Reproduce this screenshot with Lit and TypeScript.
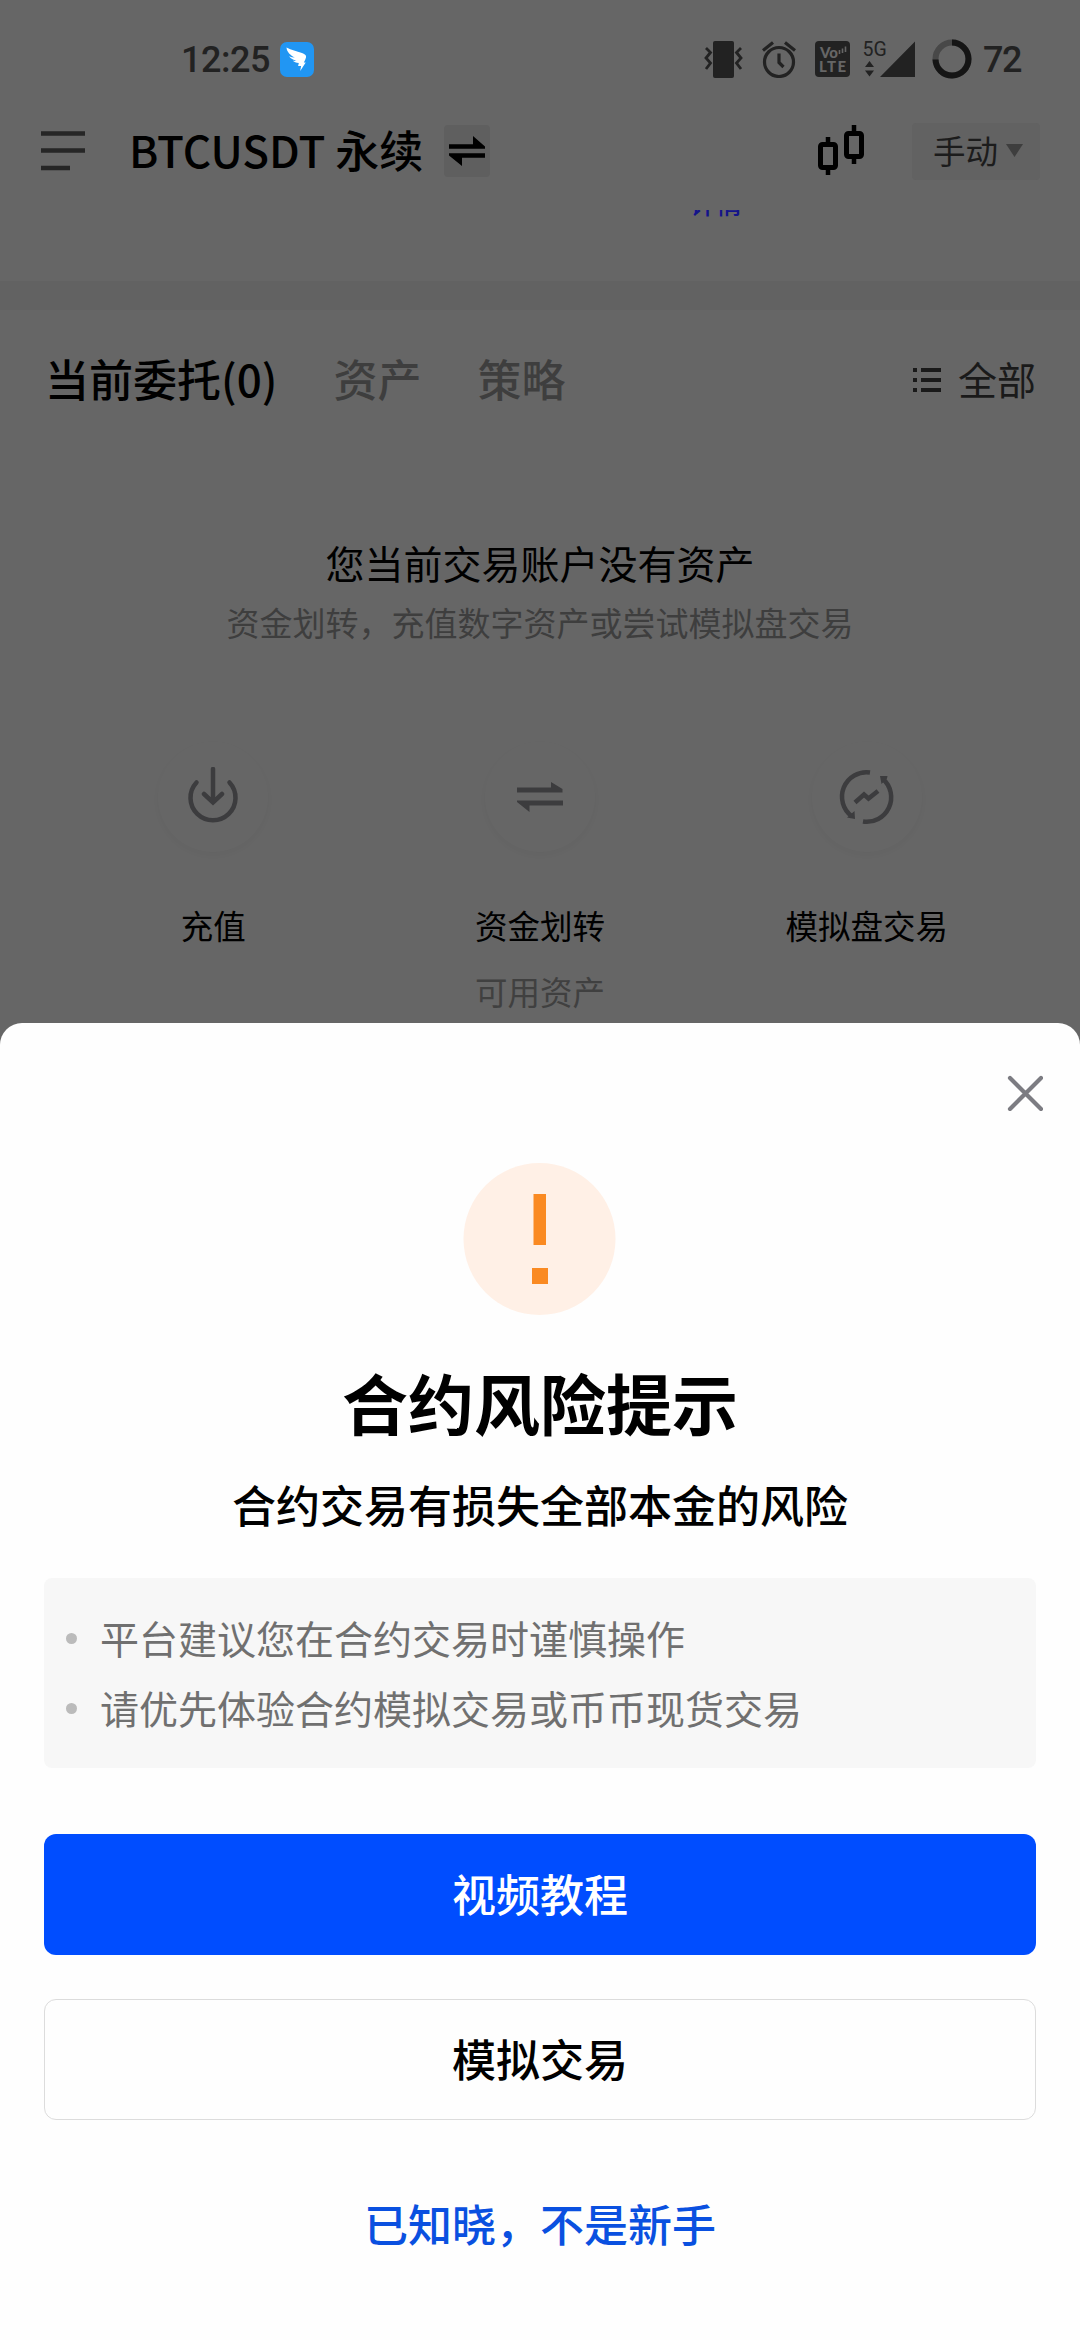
import { LitElement, html, css, svg } from "lit";
import { customElement } from "lit/decorators.js";

const swapShape = svg`<path d="M0 8.2h24V0l12 10.4v2.4H0zM36 17.2H0v2.2L13 30v-8.2h23z"/>`;

@customElement("status-bar")
class StatusBar extends LitElement {
  static styles = css`
    :host { display: flex; align-items: center; height: 118px; color: #222; fill: #222; font-family: Roboto, "Liberation Sans", sans-serif; }
    svg { display: block; flex: none; }
    .time { width: 97px; margin-left: 181px; padding-top: 2px; font-size: 36px; line-height: 40px; font-weight: 500; letter-spacing: -0.5px; white-space: nowrap; }
    .wing { margin-left: 2px; }
    .right { display: flex; align-items: center; margin-left: auto; }
    .alarm, .volte { margin-left: 19px; }
    .signal { margin-left: 13px; overflow: visible; }
    .ring { margin-left: 17px; }
    .pct { width: 97px; margin-left: 11px; padding-top: 2px; font-size: 36px; line-height: 40px; font-weight: 500; letter-spacing: -1.5px; }
    .volte text { font: 900 15px Lato, sans-serif; fill: #666; }
    .signal text { font: 400 19.500px Roboto, sans-serif; }
  `;
  render() {
    return html`
      <span class="time">12:25</span>
      <svg class="wing" width="34" height="35" viewBox="0 0 34 35">
        <rect width="34" height="35" rx="7" fill="#2196f3" />
        <path fill="#fff" d="M6.5 5.5c5 2.7 10 3.500 15.500 5.500 3.300 1.200 4.500 2.500 4 4.500-.4 1.800-1.200 3.200-2.200 5h1.900l-5.500 8.500.9-5h-3l.7-3c-2.700-.2-4.800-1-6-2.200 1.200.2 2.500.2 3.600 0-3.200-.8-5.800-2.300-7.400-4.500 1.900.8 3.800 1.200 5.800 1.200C10.500 13.400 6.800 10 6.500 5.500z" />
      </svg>
      <div class="right">
        <svg width="39" height="37" viewBox="0 0 39 37">
          <rect x="9" y="0" width="21" height="37" rx="2" />
          <path fill="none" stroke="#222" stroke-width="2.800" d="M2 7l4.500 4.500L2 17l4.500 5L2 28M37 7l-4.500 4.500L37 17l-4.500 5L37 28" />
        </svg>
        <svg class="alarm" width="34" height="37" viewBox="0 0 34 37" fill="none" stroke="#222" stroke-width="3.200">
          <circle cx="17" cy="21" r="14.500" />
          <path d="M1 9.500L11 1.500M33 9.500L23 1.500M17 12.500v9l4.500 4.500" />
        </svg>
        <svg class="volte" width="35" height="36" viewBox="0 0 35 36">
          <rect width="35" height="36" rx="4" />
          <text x="5" y="16.500" textLength="18">Vo</text>
          <text x="4" y="31" textLength="27">LTE</text>
          <path fill="none" stroke="#666" stroke-width="1.600" d="M24.500 13V9M27.500 12V7.500M30.500 11V5.500" />
        </svg>
        <svg class="signal" width="52" height="36" viewBox="0 0 52 36">
          <text x="-.5" y="14.500">5G</text>
          <path d="M52 .5V36H17zM2 26l4.500-6 4.500 6zM2 29.500l4.500 6 4.500-6z" />
        </svg>
        <svg class="ring" width="40" height="40" viewBox="0 0 40 40" fill="none" stroke-width="6">
          <circle cx="20" cy="20" r="16.500" stroke="#484848" />
          <path stroke="#151515" d="M20 3.500A16.500 16.500 0 1 1 3.500 20.500" />
        </svg>
        <span class="pct">72</span>
      </div>
    `;
  }
}

@customElement("risk-sheet")
class RiskSheet extends LitElement {
  static styles = css`
    :host { display: flex; flex-direction: column; box-sizing: border-box; height: 1317px; padding: 52px 44px 0; background: #fefefe; border-radius: 22px 22px 0 0; color: #000; text-align: center; }
    svg { display: block; }
    .close { align-self: flex-end; margin-right: -7px; }
    .alert { align-self: center; margin-top: 51px; }
    .title { margin: 45px 0 0; font-size: 66px; line-height: 80px; font-weight: 700; }
    .sub { margin: 33px 0 0; font-size: 44px; line-height: 60px; font-weight: 500; }
    .tips { display: flex; flex-direction: column; box-sizing: border-box; height: 190px; margin: 44px 0 0; padding: 24px 21px; list-style: none; border-radius: 8px; background: #f7f7f7; color: #707070; font-size: 39px; line-height: 70px; }
    .tip { display: flex; align-items: center; }
    .dot { width: 11px; height: 11px; margin: 3px 23px 0 1px; border-radius: 50%; background: #bbb; }
    .btn { display: flex; align-items: center; justify-content: center; box-sizing: border-box; height: 121px; padding: 0 0 3px; border: 0; border-radius: 12px; font: inherit; font-size: 44px; font-weight: 500; }
    .primary { margin-top: 66px; background: #004dff; color: #fff; }
    .outline { margin-top: 44px; border: 1.500px solid #dcdcdc; background: #fefefe; color: #000; }
    .link { margin-top: 73px; color: #0a50e0; font-size: 44px; line-height: 60px; font-weight: 500; }
  `;
  render() {
    const tips = ["平台建议您在合约交易时谨慎操作", "请优先体验合约模拟交易或币币现货交易"];
    return html`
      <svg class="close" width="36" height="36" viewBox="0 0 36 36" fill="none" stroke="#7c7c82" stroke-width="4.200" stroke-linecap="round">
        <path d="M3 3l31 31M34 3L3 34" />
      </svg>
      <svg class="alert" width="154" height="154" viewBox="0 0 154 154">
        <circle cx="76.500" cy="77" r="76" fill="#fff0e6" />
        <path fill="#fa8a22" d="M70.500 32h12.500v51H70.500zM69 106h16v16H69z" />
      </svg>
      <h1 class="title">合约风险提示</h1>
      <p class="sub">合约交易有损失全部本金的风险</p>
      <ul class="tips">
        ${tips.map((t) => html`<li class="tip"><span class="dot"></span>${t}</li>`)}
      </ul>
      <button class="btn primary">视频教程</button>
      <button class="btn outline">模拟交易</button>
      <div class="link">已知晓，不是新手</div>
    `;
  }
}

@customElement("app-root")
class AppRoot extends LitElement {
  static styles = css`
    :host { display: block; position: relative; height: 2340px; overflow: hidden; background: #666; color: #000; font-family: "Noto Sans CJK SC", sans-serif; }
    svg { display: block; flex: none; }
    .header { display: flex; align-items: center; height: 66px; padding: 0 40px 0 41px; }
    .pair { margin-left: 43px; font-size: 44px; line-height: 60px; font-weight: 500; white-space: nowrap; padding-bottom: 5px; }
    .swap { display: flex; align-items: center; justify-content: center; width: 46px; height: 52px; margin-left: 21px; background: #5f5f5f; border-radius: 4px; }
    .candles { margin-left: auto; }
    .mode { display: flex; align-items: center; box-sizing: border-box; width: 128px; height: 57px; margin-left: 48px; padding: 0 17px 4px 21px; background: #626262; border-radius: 4px; font-size: 32.500px; color: #1c1c1c; justify-content: space-between; }
    .caret { margin-top: 3px; }
    .scroll { height: 71px; margin-top: 26px; overflow: hidden; }
    .detail { margin: -22px 0 0 690px; font-size: 26px; line-height: 30px; font-weight: 500; color: #14148a; }
    .band { height: 29px; background: #626262; }
    .tabs { display: flex; align-items: center; height: 136px; padding: 0 44px 0 45px; font-size: 44px; color: #3e3e3e; font-weight: 500; white-space: nowrap; }
    .tab { margin-right: 56px; }
    .active { color: #000; }
    .all { display: flex; align-items: center; gap: 17px; margin-left: auto; font-size: 39px; font-weight: 400; color: #1a1a1a; }
    .list { margin-top: 4px; }
    .empty { margin-top: 91px; text-align: center; font-size: 39px; line-height: 50px; }
    .hint { margin-top: 13px; text-align: center; font-size: 33px; line-height: 44px; color: #3e3e3e; }
    .actions { display: grid; grid-template-columns: repeat(3, 1fr); justify-items: center; width: 980px; margin: 98px auto 0; }
    .action { display: flex; flex-direction: column; align-items: center; gap: 53px; font-size: 32.500px; line-height: 40px; }
    .disc { display: flex; align-items: center; justify-content: center; width: 110px; height: 110px; border-radius: 50%; box-shadow: 0 3px 6px rgba(0, 0, 0, 0.03); }
    .avail { margin-top: 26px; text-align: center; font-size: 32.500px; line-height: 40px; color: #404040; }
    .sheet { position: absolute; left: 0; right: 0; bottom: 0; }
  `;
  render() {
    return html`
      <status-bar></status-bar>
      <div class="header">
        <svg width="45" height="40" viewBox="0 0 45 40" fill="none" stroke="#262626" stroke-width="4.500">
          <path d="M0 2.500h44M0 19.500h44M0 37h29" />
        </svg>
        <span class="pair">BTCUSDT 永续</span>
        <span class="swap"><svg width="36" height="30" viewBox="0 0 36 30">${swapShape}</svg></span>
        <svg class="candles" width="46" height="52" viewBox="0 0 46 52" fill="none" stroke="#000" stroke-width="5">
          <rect x="2.500" y="19.500" width="15" height="23" rx="2" />
          <rect x="28.500" y="8.500" width="15" height="23" rx="2" />
          <path stroke-width="4.500" d="M10 12v8M10 42v8M36 0v8M36 31v8" />
        </svg>
        <div class="mode">手动<svg class="caret" width="17" height="13" viewBox="0 0 17 13"><path fill="#3e3e3e" d="M0 0h17L8.500 13z" /></svg></div>
      </div>
      <div class="scroll"><div class="detail">详情</div></div>
      <div class="band"></div>
      <div class="tabs">
        <span class="tab active">当前委托(0)</span>
        <span class="tab">资产</span>
        <span class="tab">策略</span>
        <span class="all">
          <svg class="list" width="28" height="24" viewBox="0 0 28 24" fill="#1a1a1a">
            <path d="M0 0h4v4H0zM8 0h20v4H8zM0 10h4v4H0zM8 10h20v4H8zM0 20h4v4H0zM8 20h20v4H8z" />
          </svg>全部
        </span>
      </div>
      <div class="empty">您当前交易账户没有资产</div>
      <div class="hint">资金划转，充值数字资产或尝试模拟盘交易</div>
      <div class="actions">
        <div class="action">
          <span class="disc"><svg width="60" height="60" viewBox="0 0 60 60" fill="none" stroke="#3c3c3e" stroke-width="4.500" stroke-linecap="round">
            <path d="M13.500 15.500A22.500 22.500 0 1 0 46.500 15.500" />
            <path d="M30 2v32M21 27l9 8.500 9-8.500" />
          </svg></span>充值
        </div>
        <div class="action">
          <span class="disc"><svg width="46" height="30" viewBox="0 0 46 30" fill="#3c3c3e">
            <path d="M0 5.500h34V0l11.500 7v3.500H0zM46 18.500H0V20l12.500 10v-6.500H46z" />
          </svg></span>资金划转
        </div>
        <div class="action">
          <span class="disc"><svg width="60" height="60" viewBox="0 0 60 60" fill="none" stroke="#3c3c3e" stroke-width="4.500">
            <path d="M33 5.500A24.500 24.500 0 0 0 15 49.500M26 54.500A24.500 24.500 0 0 0 46 12" />
            <path d="M18 35.500l9-8 4.500 4L41 24" />
            <path fill="#3c3c3e" stroke="none" d="M43 9l7.500 0-.5 2.500L44.500 17zM17.500 44l.5 8-8-1.500z" />
          </svg></span>模拟盘交易
        </div>
      </div>
      <div class="avail">可用资产</div>
      <risk-sheet class="sheet"></risk-sheet>
    `;
  }
}
